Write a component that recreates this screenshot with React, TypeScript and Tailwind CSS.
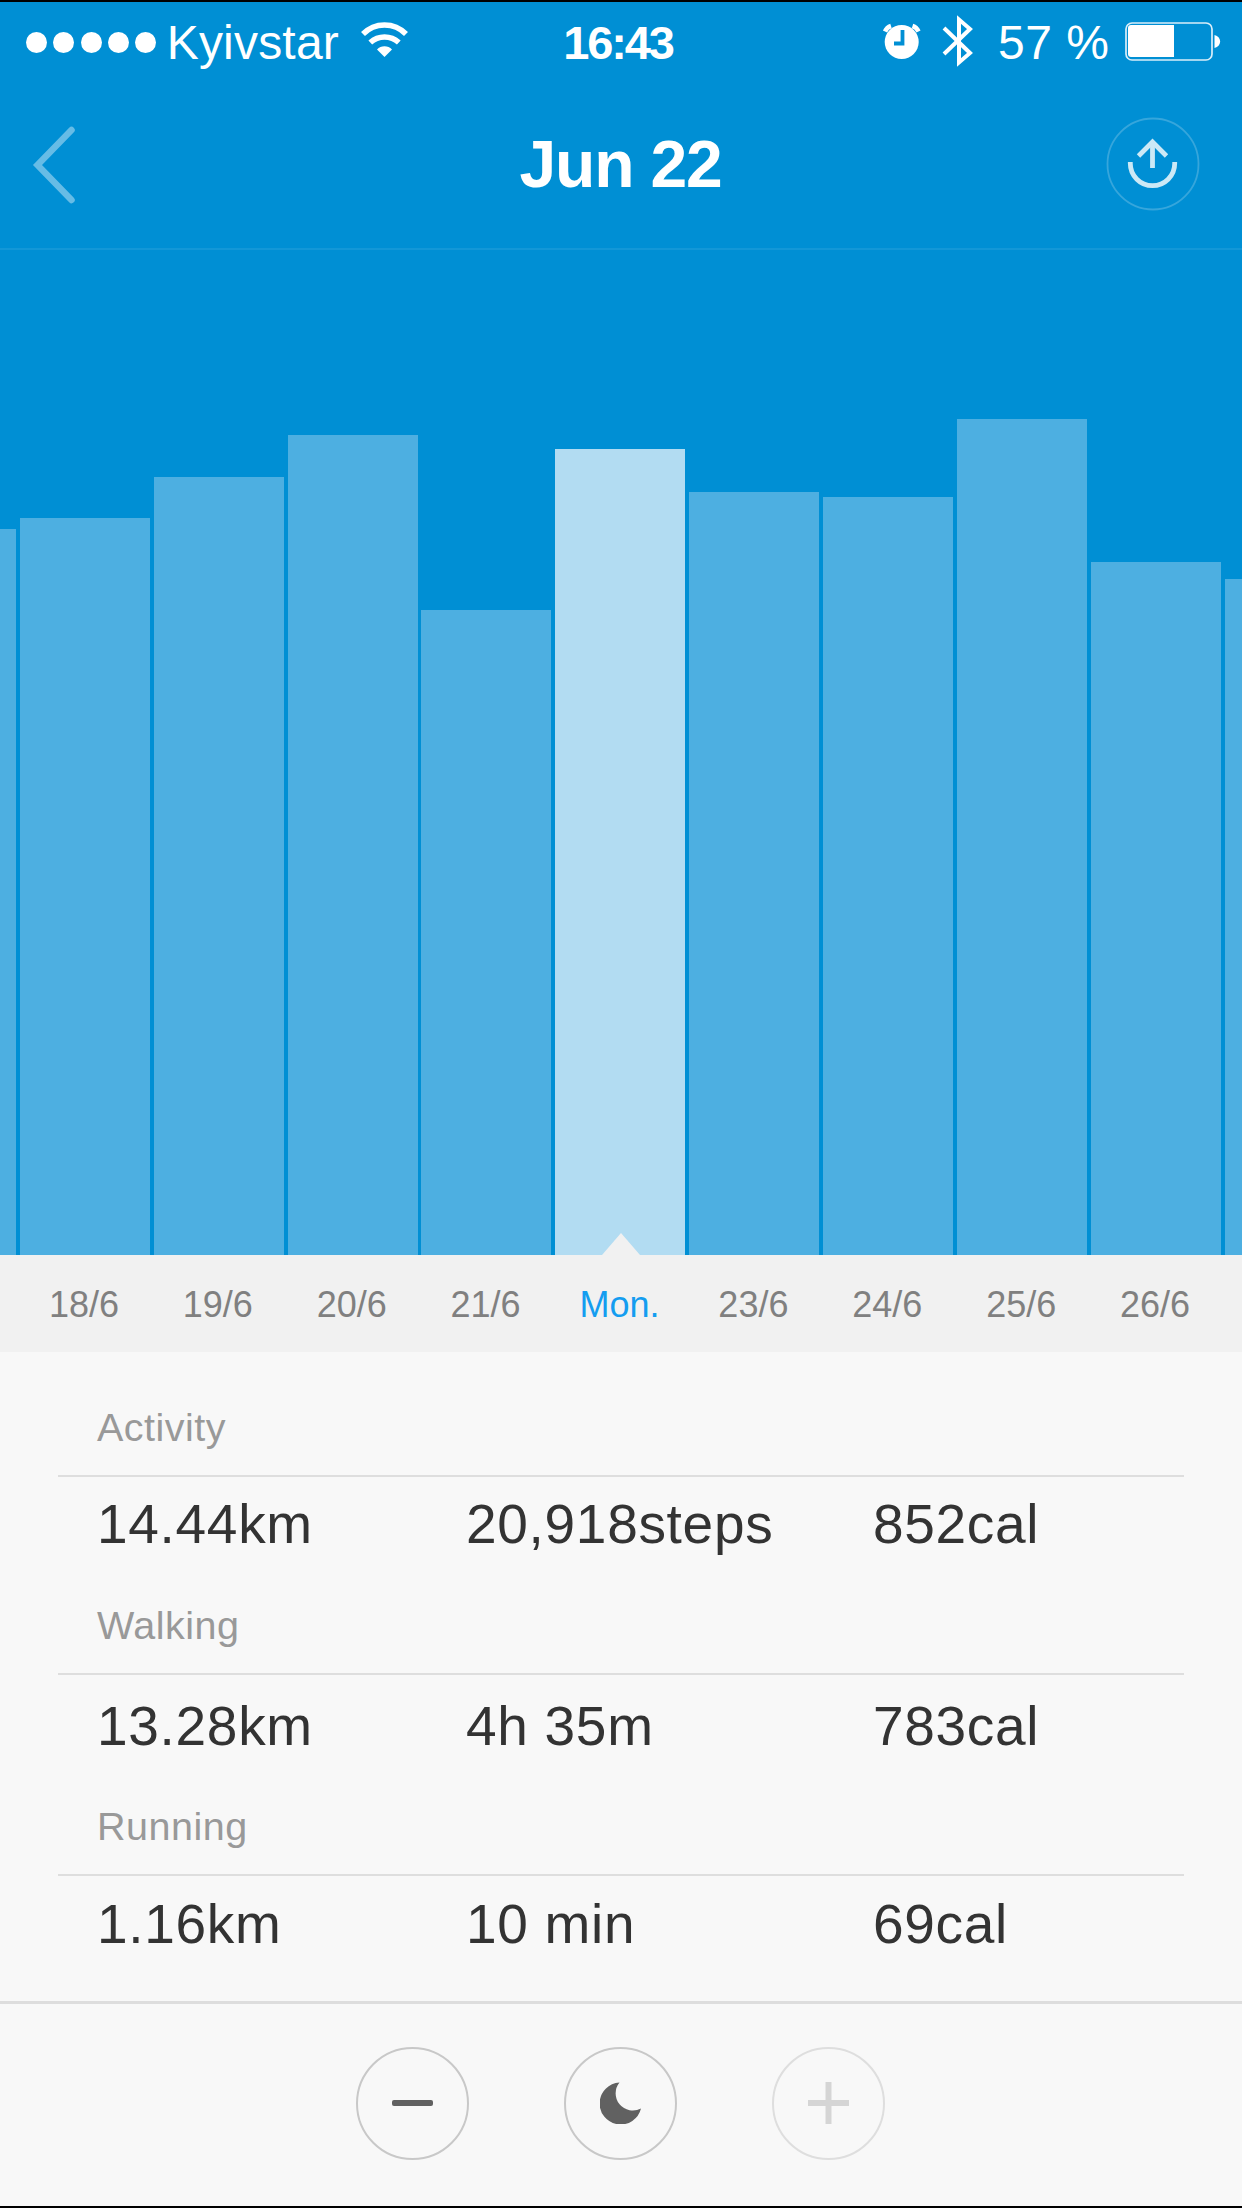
const FONT = "font-['Liberation_Sans',Arial,sans-serif]";

// Bars are laid out edge to edge, `gap` is the space before the bar
const bars = [
  { id: "17/6", gap: 0, width: 16, height: 726 },
  { id: "18/6", gap: 4, width: 130, height: 737 },
  { id: "19/6", gap: 4, width: 130, height: 778 },
  { id: "20/6", gap: 4, width: 130, height: 820 },
  { id: "21/6", gap: 3, width: 130, height: 645 },
  { id: "22/6", gap: 4, width: 130, height: 806, active: true },
  { id: "23/6", gap: 4, width: 130, height: 763 },
  { id: "24/6", gap: 4, width: 130, height: 758 },
  { id: "25/6", gap: 4, width: 130, height: 836 },
  { id: "26/6", gap: 4, width: 130, height: 693 },
  { id: "27/6", gap: 4, width: 17, height: 676 },
];

const days = ["18/6", "19/6", "20/6", "21/6", "Mon.", "23/6", "24/6", "25/6", "26/6"];

function StatusBar() {
  return (
    <div className="flex h-[80px] items-center text-white">
      <div className="flex w-[480px] items-center pl-[26px]">
        <div className="flex gap-[6.3px]">
          {[0, 1, 2, 3, 4].map((i) => (
            <span key={i} className="h-[21px] w-[21px] rounded-full bg-white" />
          ))}
        </div>
        <span className="ml-[10.5px] mt-[2px] w-[182px] text-[48px] leading-[78px] tracking-[0.2px]">Kyivstar</span>
        <svg className="mb-[4px] ml-[11px]" width="50" height="38" viewBox="0 0 50 38" fill="none" stroke="#fff">
          <path d="M3 13a30 30 0 0 1 43 0" strokeWidth="5.5" />
          <path d="M10.3 21.5a21 21 0 0 1 28.500 0" strokeWidth="5.5" />
          <path d="M17 28.5a10.500 10.500 0 0 1 15 0L24.500 36z" fill="#fff" stroke="none" />
        </svg>
      </div>
      <span className="mt-[2px] w-[276px] text-center text-[47px] font-bold leading-[78px] tracking-[-2.1px]">16:43</span>
      <div className="flex flex-1 items-center">
        <svg className="ml-[126px]" width="40" height="40" viewBox="0 0 40 40" fill="none">
          <circle cx="19.7" cy="20" r="17" fill="#fff" />
          <path d="M20.5 8v13.500H12" stroke="#008fd4" strokeWidth="3.8" />
          <path d="M3 9.500a10 10 0 0 1 6-5.500M30.500 4a10 10 0 0 1 6 5.500" stroke="#fff" strokeWidth="4.5" />
        </svg>
        <svg className="mb-[2px] ml-[20px]" width="34" height="56" viewBox="0 0 34 56" fill="none" stroke="#fff" strokeWidth="4">
          <path d="M2 15l26 25-11 9.500V6.500l11 9.500L2 41" />
        </svg>
        <span className="ml-[22px] mt-[2px] w-[117px] whitespace-nowrap text-[48px] leading-[78px] tracking-[0.5px]">57 %</span>
        <svg className="ml-[10px]" width="96" height="40" viewBox="0 0 96 40">
          <rect x="1" y="1" width="86" height="37" rx="6" fill="none" stroke="#d9eef9" strokeWidth="1.7" />
          <path d="M6 3h43v32H6a3 3 0 0 1-3-3V6a3 3 0 0 1 3-3z" fill="#fff" />
          <path d="M89.500 13c7.500 2 7.500 11 0 13z" fill="#fff" />
        </svg>
      </div>
    </div>
  );
}

function NavBar() {
  return (
    <header className="flex h-[168px] items-center justify-between border-b-2 border-[#1397d7] pb-[4px] pl-[32px] pr-[42px] pt-[2px]">
      <svg width="46" height="80" viewBox="0 0 46 80" fill="none" stroke="#66bce6" strokeWidth="6.500" strokeLinecap="round">
        <path d="M39.500 6L5.500 41l34 35" />
      </svg>
      <h1 className="ml-[57px] text-[66px] font-bold leading-[80px] tracking-[-1.2px] text-white">Jun 22</h1>
      <svg width="94" height="94" viewBox="0 0 94 94" fill="none">
        <circle cx="47" cy="47" r="45.5" stroke="#36a6dc" strokeWidth="1.8" />
        <g stroke="#cce9f6" strokeWidth="4.8">
          <path d="M24.300 45v1.500a22.200 22.200 0 0 0 44.400 0v-1.500" />
          <path d="M46.500 51V26" />
          <path d="M32.500 39l14-14 14 14" />
        </g>
      </svg>
    </header>
  );
}

type StatProps = {
  label: string;
  values: string[];
  className: string;
  rowClassName: string;
};

function Stat({ label, values, className, rowClassName }: StatProps) {
  return (
    <section className={className}>
      <h2 className="h-[50px] pl-[39px] text-[39.5px] leading-[48px] tracking-[0.5px] text-[#999]">{label}</h2>
      <div
        className={`mt-[22px] grid grid-cols-[369px_407px_1fr] border-t-2 border-[#dedede] pl-[39px] text-[55px] leading-[64px] tracking-[0.7px] text-[#333] ${rowClassName}`}
      >
        {values.map((v) => (
          <span key={v}>{v}</span>
        ))}
      </div>
    </section>
  );
}

export default function App() {
  return (
    <div className={`flex h-[2208px] w-[1242px] flex-col overflow-hidden border-y-2 border-black bg-[#f8f8f8] ${FONT}`}>
      {/* Header and chart */}
      <div className="flex h-[1253px] flex-col bg-[#008fd4]">
        <StatusBar />
        <NavBar />
        <div className="flex flex-1 items-end">
          {bars.map((bar) => (
            <div
              key={bar.id}
              className={`flex shrink-0 items-end justify-center ${bar.active ? "bg-[#b2dcf2]" : "bg-[#4dafe1]"}`}
              style={{ width: bar.width, height: bar.height, marginLeft: bar.gap }}
            >
              {bar.active && (
                <svg className="ml-[2px]" width="38" height="22" viewBox="0 0 38 22">
                  <path d="M0 22L19 0l19 22z" fill="#f1f1f1" />
                </svg>
              )}
            </div>
          ))}
        </div>
      </div>

      {/* Days */}
      <div className="grid h-[97px] shrink-0 grid-cols-[repeat(9,133.9px)] bg-[#f1f1f1] pl-[17px] text-center text-[36px] leading-[99px] text-[#808080]">
        {days.map((day) => (
          <span key={day} className={day === "Mon." ? "text-[#149df0]" : ""}>
            {day}
          </span>
        ))}
      </div>

      {/* Totals */}
      <main className="h-[649px] shrink-0 px-[58px] pt-[51px]">
        <Stat className="h-[198px]" rowClassName="pt-[15px]" label="Activity" values={["14.44km", "20,918steps", "852cal"]} />
        <Stat className="h-[201px]" rowClassName="pt-[19px]" label="Walking" values={["13.28km", "4h 35m", "783cal"]} />
        <Stat className="h-[198px]" rowClassName="pt-[16px]" label="Running" values={["1.16km", "10 min", "69cal"]} />
      </main>

      {/* Bottom controls */}
      <footer className="flex flex-1 items-center justify-center gap-[95px] border-t-[3px] border-[#ddd] pb-[4px] pr-[1px]">
        <button className="flex h-[113px] w-[113px] items-center justify-center rounded-full border-2 border-[#c8c8c8]">
          <span className="h-[6px] w-[41px] rounded-[2px] bg-[#616161]" />
        </button>
        <button className="flex h-[113px] w-[113px] items-center justify-center rounded-full border-2 border-[#c8c8c8]">
          <svg width="42" height="42" viewBox="0 0 42 42">
            <path d="M19.500 0.500A21 21 0 1 0 41 26.500A17.200 17.200 0 0 1 19.500 0.500z" fill="#616161" />
          </svg>
        </button>
        <button className="flex h-[113px] w-[113px] items-center justify-center rounded-full border-2 border-[#dedede]">
          <svg width="41" height="42" viewBox="0 0 41 42" stroke="#d5d5d5" strokeWidth="6">
            <path d="M0 21h41M20.500 0v42" />
          </svg>
        </button>
      </footer>
    </div>
  );
}
